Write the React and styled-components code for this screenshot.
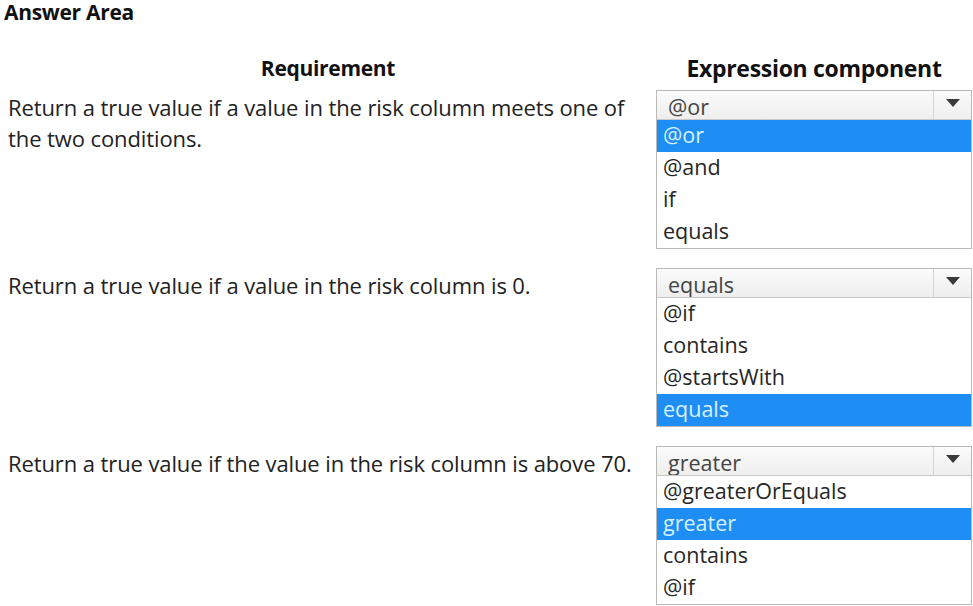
import React from "react";
import styled, { createGlobalStyle } from "styled-components";

const Global = createGlobalStyle`
  html, body { margin: 0; padding: 0; background: #ffffff; }
  body { font-family: "Open Sans", "Noto Sans", sans-serif; color: #222; }
`;

const Page = styled.div`
  width: 973px;
  height: 606px;
  overflow: hidden;
  padding: 0 0 0 4px;
  box-sizing: border-box;
`;

const Title = styled.div`
  font-size: 21px;
  font-weight: 700;
  line-height: 24px;
  color: #111;
  letter-spacing: -0.3px;
`;

const Table = styled.div`
  display: grid;
  grid-template-columns: 648px 316px;
  column-gap: 4px;
  margin-top: 30px;
`;

const HeadCell = styled.div`
  font-size: ${(p) => p.$size || 21}px;
  font-weight: 700;
  line-height: 28px;
  text-align: center;
  color: #111;
  letter-spacing: -0.3px;
  margin-bottom: 8px;
`;

const Requirement = styled.div`
  font-size: 22px;
  line-height: 31px;
  color: #222;
  padding: 2px 14px 0 4px;
  letter-spacing: -0.1px;
`;

const Dropdown = styled.div`
  border: 1px solid #b9b9b9;
  margin-bottom: ${(p) => (p.$last ? 0 : 19)}px;
  background: #fff;
`;

const Header = styled.div`
  display: flex;
  height: 28px;
  border-bottom: 1px solid #c8c8c8;
  background: linear-gradient(#fbfbfb, #eeeeee);
  border-radius: 3px 3px 0 0;
`;

const HeaderText = styled.div`
  flex: 1;
  overflow: hidden;
  font-size: 21.5px;
  line-height: 28px;
  padding: 2px 0 0 11px;
  box-sizing: border-box;
  color: #444;
  height: 28px;
`;

const ArrowCell = styled.div`
  width: 38px;
  border-left: 1px solid #d4d4d4;
  display: flex;
  align-items: center;
  justify-content: center;
  padding-bottom: 4px;
  box-sizing: border-box;
`;

const Item = styled.div`
  height: 32px;
  line-height: 30px;
  font-size: 21.5px;
  padding-left: 6px;
  background: ${(p) => (p.$sel ? "#1e8ef5" : "transparent")};
  color: ${(p) => (p.$sel ? "#d6f1ff" : "#262626")};
`;

const Arrow = () => (
  <svg width="14" height="8" viewBox="0 0 14 8">
    <path d="M0 0 H14 L7 8 Z" fill="#3a3a3a" />
  </svg>
);

const rows = [
  {
    text: "Return a true value if a value in the risk column meets one of the two conditions.",
    value: "@or",
    options: ["@or", "@and", "if", "equals"],
    sel: 0,
  },
  {
    text: "Return a true value if a value in the risk column is 0.",
    value: "equals",
    options: ["@if", "contains", "@startsWith", "equals"],
    sel: 3,
  },
  {
    text: "Return a true value if the value in the risk column is above 70.",
    value: "greater",
    options: ["@greaterOrEquals", "greater", "contains", "@if"],
    sel: 1,
  },
];

export default function App() {
  return (
    <>
      <Global />
      <Page>
        <Title>Answer Area</Title>
        <Table>
          <HeadCell $size={21}>Requirement</HeadCell>
          <HeadCell $size={23}>Expression component</HeadCell>
          {rows.map((r, i) => (
            <React.Fragment key={i}>
              <Requirement>{r.text}</Requirement>
              <Dropdown $last={i === rows.length - 1}>
                <Header>
                  <HeaderText>{r.value}</HeaderText>
                  <ArrowCell>
                    <Arrow />
                  </ArrowCell>
                </Header>
                {r.options.map((o, j) => (
                  <Item key={j} $sel={j === r.sel}>
                    {o}
                  </Item>
                ))}
              </Dropdown>
            </React.Fragment>
          ))}
        </Table>
      </Page>
    </>
  );
}
